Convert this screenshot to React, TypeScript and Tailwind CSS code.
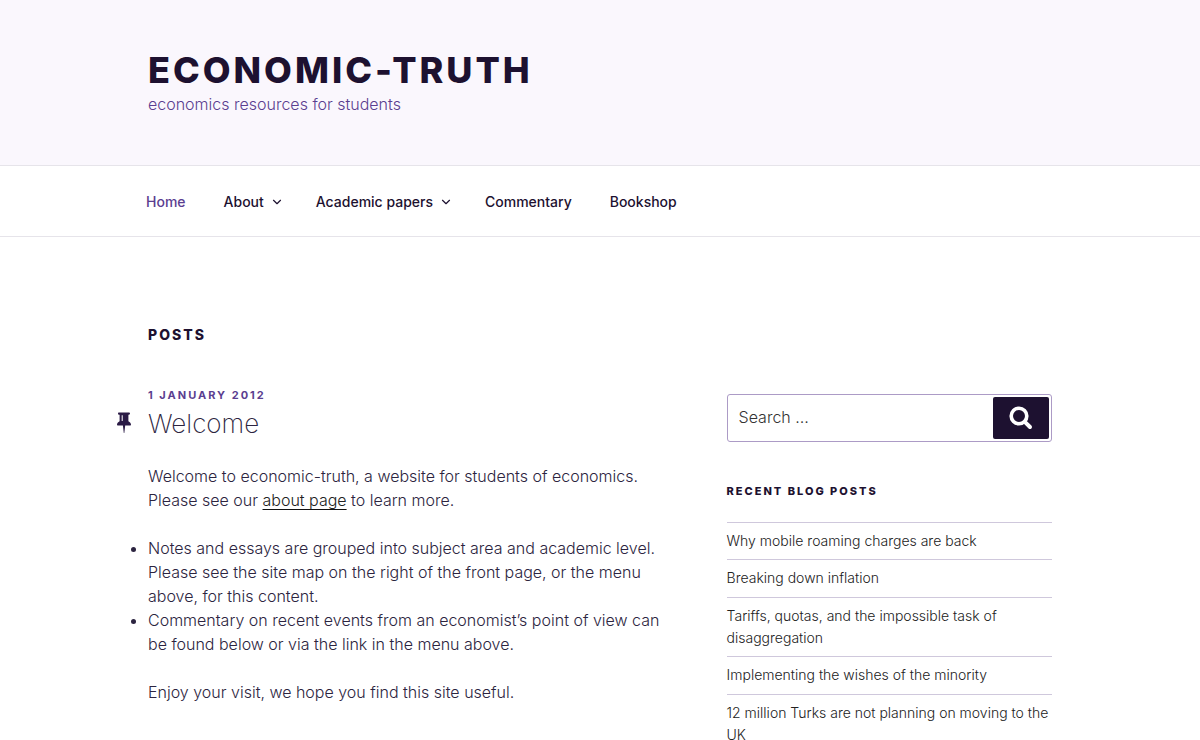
import { ChevronDown } from "lucide-react";

const navItems = [
  { label: "Home", active: true },
  { label: "About", hasMenu: true },
  { label: "Academic papers", hasMenu: true },
  { label: "Commentary" },
  { label: "Bookshop" },
];

const recentPosts = [
  "Why mobile roaming charges are back",
  "Breaking down inflation",
  "Tariffs, quotas, and the impossible task of disaggregation",
  "Implementing the wishes of the minority",
  "12 million Turks are not planning on moving to the UK",
];

function Header() {
  return (
    <header className="border-b border-[#e6e4ea] bg-[#faf7fd] pt-12 pb-[49px]">
      <div className="mx-auto max-w-[1000px] px-12">
        <h1 className="text-[36px] leading-[44px] font-extrabold tracking-[3px] text-[#1d1130] uppercase">
          <a href="#">Economic-Truth</a>
        </h1>
        <p className="text-[16px] leading-6 font-light text-[#5b3e90]">economics resources for students</p>
      </div>
    </header>
  );
}

function Nav() {
  return (
    <nav className="border-b border-[#e6e4ea]" aria-label="Top menu">
      <ul className="mx-auto flex max-w-[1004px] gap-[38px] px-12 pt-[26px] pb-6 text-[14px] leading-5 font-medium">
        {navItems.map((item) => (
          <li key={item.label}>
            <a
              href="#"
              className={item.active ? "text-[#5b3e90]" : "flex items-center gap-1.5 text-[#1d1130]"}
            >
              {item.label}
              {item.hasMenu && <ChevronDown size={14} strokeWidth={2} className="-mr-1.5" />}
            </a>
          </li>
        ))}
      </ul>
    </nav>
  );
}

function PinIcon() {
  return (
    <svg viewBox="0 0 14 22" className="h-[22px] w-[14px]" fill="currentColor" aria-hidden="true">
      <path
        fillRule="evenodd"
        d="M2 0.5H12Q13 0.5 13 1.5T12 2.8H11.4V9.2C13 9.9 14 11.2 14 12.8Q14 13.6 13.3 13.6H8.2L7.3 21H6.8L5.9 13.6H0.7Q0 13.6 0 12.8C0 11.2 1 9.9 2.6 9.2V2.8H2Q1 2.8 1 1.5T2 0.5ZM4.7 3.2V9H5.7V3.2Z"
      />
    </svg>
  );
}

function SearchForm() {
  return (
    <form
      className="flex h-12 items-center rounded-[3px] border border-[#ac9bc6] p-0.5"
      onSubmit={(e) => e.preventDefault()}
    >
      <input
        type="search"
        aria-label="Search for:"
        placeholder="Search …"
        className="min-w-0 flex-1 px-[9px] pb-0.5 text-[16px] leading-6 font-light outline-none placeholder:text-[#333]"
      />
      <button
        type="submit"
        aria-label="Search"
        className="flex h-[42px] w-14 items-center justify-center rounded-[2px] bg-[#1d1130] text-white"
      >
        <svg viewBox="0 0 24 24" className="size-6" fill="none" stroke="currentColor" aria-hidden="true">
          <circle cx="10" cy="10" r="7.8" strokeWidth="3.6" />
          <path d="M15.8 15.8L21 21" strokeWidth="4" strokeLinecap="round" />
        </svg>
      </button>
    </form>
  );
}

function Article() {
  return (
    <article>
      <p className="text-[11px] leading-4 font-bold tracking-[2px] text-[#5b3e90] uppercase">
        <time dateTime="2012-01-01">1 January 2012</time>
      </p>
      <div className="relative">
        <span className="absolute top-[9px] -left-[31px] text-[#2a1a45]">
          <PinIcon />
        </span>
        <h3 className="text-[26px] leading-[42px] font-extralight">
          <a href="#">Welcome</a>
        </h3>
      </div>
      <div className="mt-[19px] flex flex-col gap-6 text-[16px] leading-6 font-light">
        <p>
          Welcome to economic-truth, a website for students of economics. Please see our{" "}
          <a
            href="#"
            className="text-[#222] underline decoration-[#111] decoration-1 underline-offset-[3px] [text-decoration-skip-ink:none]"
          >
            about page
          </a>{" "}
          to learn more.
        </p>
        <ul className="list-disc">
          <li>
            Notes and essays are grouped into subject area and academic level. Please see the site map on the
            right of the front page, or the menu above, for this content.
          </li>
          <li>
            Commentary on recent events from an economist’s point of view can be found below or via the link
            in the menu above.
          </li>
        </ul>
        <p>Enjoy your visit, we hope you find this site useful.</p>
      </div>
    </article>
  );
}

function Sidebar() {
  return (
    <aside className="w-[36%] pt-[7px]">
      <SearchForm />
      <h2 className="mt-[41px] mb-[23px] text-[11px] leading-4 font-extrabold tracking-[2px] text-[#1d1130] uppercase">
        Recent blog posts
      </h2>
      <ul className="border-t border-[#cfc8dc] text-[14px] leading-[22px] font-light text-[#222]">
        {recentPosts.map((title) => (
          <li key={title} className="border-b border-[#cfc8dc] py-[7px] even:pb-2">
            <a href="#">{title}</a>
          </li>
        ))}
      </ul>
    </aside>
  );
}

export default function App() {
  return (
    <div className="min-h-screen bg-white font-['Inter',sans-serif] text-[#2c2440]">
      <Header />
      <Nav />
      <div className="mx-auto max-w-[1000px] px-12 pt-[88px]">
        <h2 className="text-[14px] leading-5 font-extrabold tracking-[2px] text-[#1d1130] uppercase">Posts</h2>
        <div className="mt-[42px] flex justify-between">
          <main className="w-[58%]">
            <Article />
          </main>
          <Sidebar />
        </div>
      </div>
    </div>
  );
}
